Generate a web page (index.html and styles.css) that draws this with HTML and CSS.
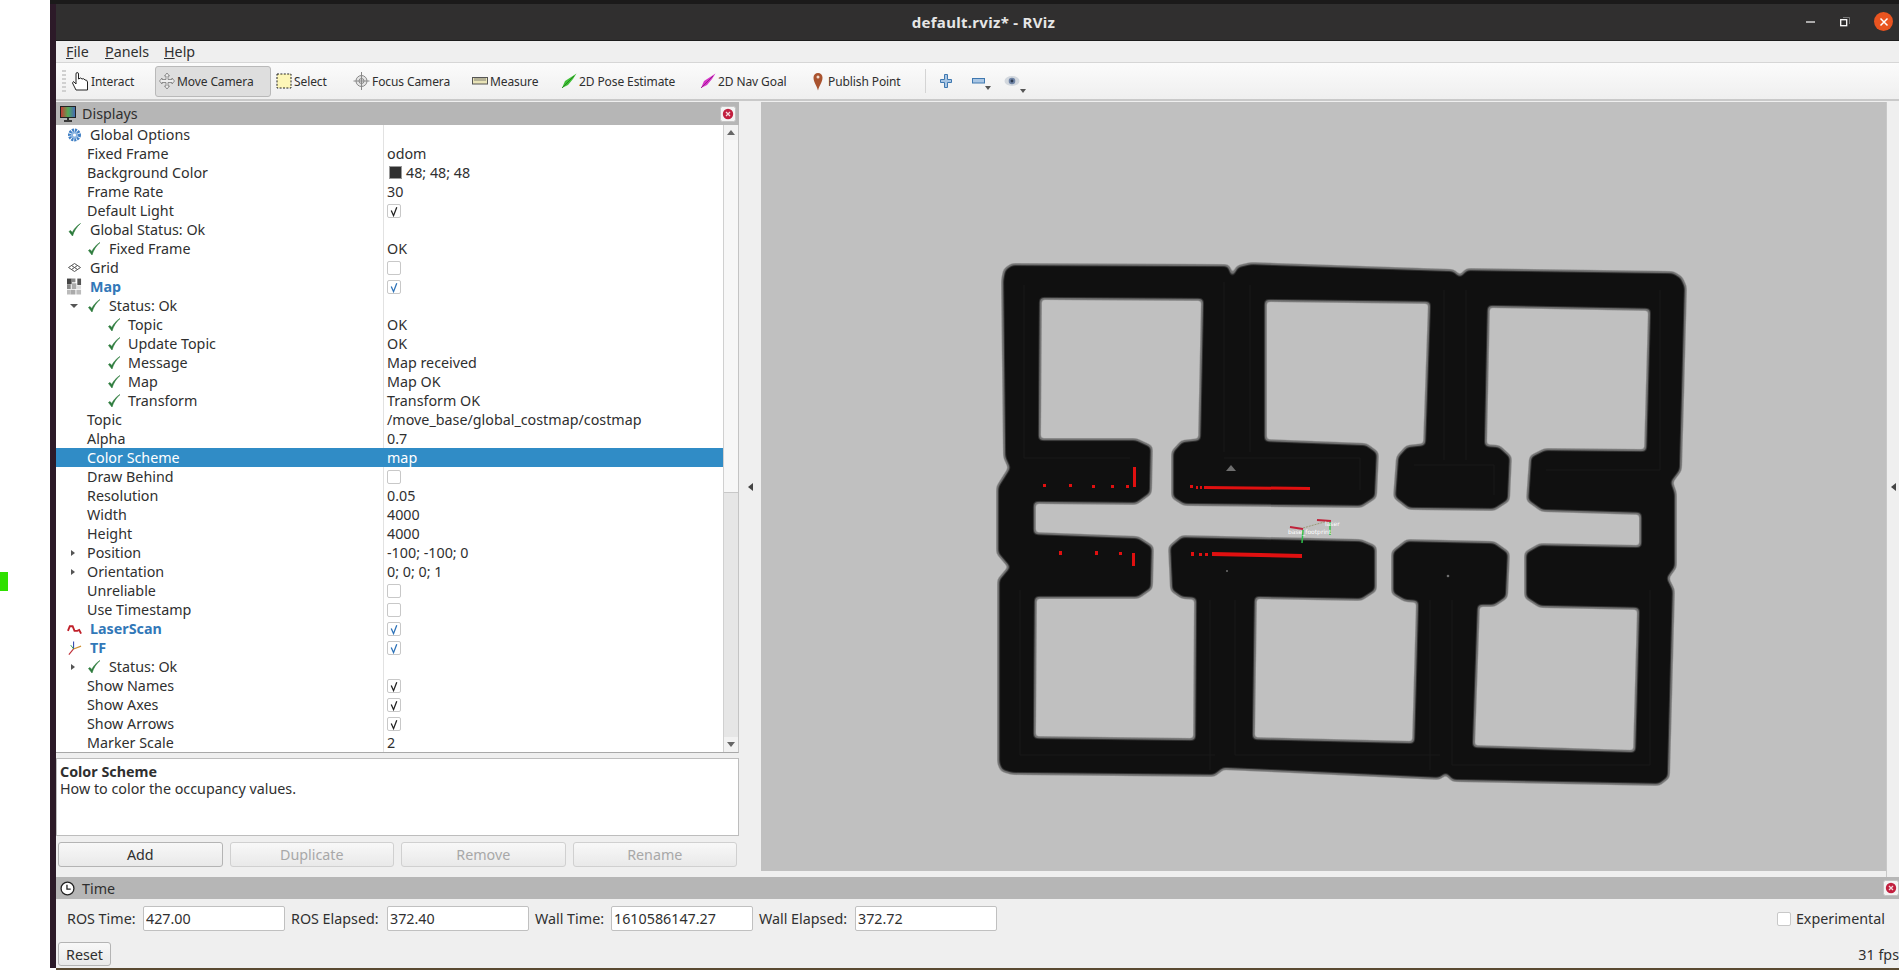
FILE: index.html
```html
<!DOCTYPE html>
<html lang="en">
<head>
  <meta charset="UTF-8">
  <title>default.rviz* - RViz</title>
  <link rel="stylesheet" href="styles.css">
</head>
<body>
  <svg class="defs" width="0" height="0">
    <symbol id="ok" viewBox="0 0 14 16">
      <path d="M1.5 9.5 L5 14 C6.5 9 9 5 13 1.5 C9 4 6.5 7 4.8 10.5 L3 8.5 Z" fill="#2b7a3b" stroke="#2b7a3b" stroke-width=".6"/>
    </symbol>
    <symbol id="tick" viewBox="0 0 13 13">
      <path d="M3.5 5.5 L6 11 L9.5 2" fill="none" stroke="currentColor" stroke-width="1.4"/>
    </symbol>
    <symbol id="redx" viewBox="0 0 16 16">
      <rect x=".5" y=".5" width="15" height="15" rx="2" fill="#f4f4f4" stroke="#c4c4c4"/>
      <circle cx="8" cy="8" r="5.2" fill="#c2203f"/>
      <path d="M6 6 L10 10 M10 6 L6 10" stroke="#f4d8dd" stroke-width="1.3"/>
    </symbol>
  </svg>

  <div class="desktop">
    <div class="green-mark"></div>
  </div>
  <div class="edge"></div>

  <div class="window">
    <div class="topline"></div>
    <header class="titlebar">
      <span class="title">default.rviz* - RViz</span>
      <div class="winbtns">
        <svg width="10" height="4" viewBox="0 0 10 4"><path d="M0 2H9" stroke="#fff" stroke-width="1.2"/></svg>
        <svg width="10" height="10" viewBox="0 0 10 10"><rect x=".7" y="2.7" width="6" height="6" fill="none" stroke="#fff" stroke-width="1.3"/><path d="M3 .5H9.5V7" fill="none" stroke="#8a8a8a" stroke-width=".8"/></svg>
        <span class="winclose"><svg width="10" height="10" viewBox="0 0 10 10"><path d="M1.5 1.5L8.5 8.5M8.5 1.5L1.5 8.5" stroke="#fff" stroke-width="1.5"/></svg></span>
      </div>
    </header>

    <nav class="menubar">
      <span class="m-file"><u>F</u>ile</span>
      <span class="m-panels"><u>P</u>anels</span>
      <span><u>H</u>elp</span>
    </nav>

    <div class="toolbar">
      <div class="grip"></div>
      <div class="tool t-interact">
        <svg width="18" height="20" viewBox="0 0 18 20"><path d="M5 19 L1.5 12 L2.5 10.5 L5 13 V3 Q5 1.5 6.2 1.5 T7.5 3 V8 Q10 6 11 8 Q13 7 14 9 Q16 8.5 16.5 11 V19 Z" fill="#fff" stroke="#222" stroke-width="1"/></svg>
        <span>Interact</span>
      </div>
      <div class="tool t-move on">
        <svg width="16" height="18" viewBox="0 0 16 18"><path d="M8 1 L10.5 4 H9 V7.5 H13 V6 L15.5 9 L13 12 V10.5 H9 V14 H10.5 L8 17 L5.5 14 H7 V10.5 H3 V12 L.5 9 L3 6 V7.5 H7 V4 H5.5 Z" fill="#eee" stroke="#777" stroke-width=".8"/></svg>
        <span>Move Camera</span>
      </div>
      <div class="tool t-select">
        <svg width="16" height="16" viewBox="0 0 16 16"><rect x="1" y="1" width="14" height="14" fill="#fdf6b8" stroke="#222" stroke-dasharray="2 1.4"/></svg>
        <span>Select</span>
      </div>
      <div class="tool t-focus">
        <svg width="17" height="20" viewBox="0 0 17 20"><circle cx="8.500" cy="10" r="5.500" fill="#e4e4e4" stroke="#888"/><path d="M8.500 1V19M.5 10H16.500" stroke="#888"/><circle cx="8.500" cy="10" r="2.500" fill="none" stroke="#888"/></svg>
        <span>Focus Camera</span>
      </div>
      <div class="tool t-measure">
        <svg width="16" height="8" viewBox="0 0 16 8"><rect x=".5" y=".5" width="15" height="6.500" fill="#e9e4b8" stroke="#555"/><path d="M3 1V4M5 1V4M7 1V4M9 1V4M11 1V4M13 1V4" stroke="#555" stroke-width=".7"/></svg>
        <span>Measure</span>
      </div>
      <div class="tool t-pose">
        <svg width="16" height="16" viewBox="0 0 16 16"><path d="M1 15 L4 8 L11 3.500 L15.500 .5 L12 6 L7 12 Z" fill="#3fbf35"/><path d="M1 15 L13 3" stroke="#1d7a1a" stroke-width=".8"/></svg>
        <span>2D Pose Estimate</span>
      </div>
      <div class="tool t-nav">
        <svg width="16" height="16" viewBox="0 0 16 16"><path d="M1 15 L4 8 L11 3.500 L15.500 .5 L12 6 L7 12 Z" fill="#d634c8"/><path d="M1 15 L13 3" stroke="#8a1a80" stroke-width=".8"/></svg>
        <span>2D Nav Goal</span>
      </div>
      <div class="tool t-publish">
        <svg width="10" height="19" viewBox="0 0 10 19"><path d="M5 18.500 C3.500 13 .5 10 .5 5.500 A4.500 4.500 0 0 1 9.500 5.500 C9.500 10 6.500 13 5 18.500 Z" fill="#a9532f"/><circle cx="5" cy="5" r="1.500" fill="#f3dccf"/></svg>
        <span>Publish Point</span>
      </div>
      <div class="tool-sep"></div>
      <svg class="t-plus" width="12" height="14" viewBox="0 0 12 14"><path d="M4.500 .5H7.500V5.500H11.500V8.500H7.500V13.500H4.500V8.500H.5V5.500H4.500Z" fill="#a9c6e4" stroke="#3f78b0"/></svg>
      <div class="t-minus-wrap">
        <svg width="13" height="6" viewBox="0 0 13 6"><rect x=".5" y=".5" width="12" height="4.500" fill="#a9c6e4" stroke="#3f78b0"/></svg>
        <i class="caret"></i>
      </div>
      <div class="t-eye-wrap">
        <svg width="16" height="12" viewBox="0 0 16 12"><ellipse cx="8" cy="6" rx="7.500" ry="5" fill="#d3d8de"/><circle cx="8" cy="6" r="3.300" fill="#6f84a6"/><circle cx="8" cy="6" r="1.400" fill="#2c3a50"/></svg>
        <i class="caret"></i>
      </div>
    </div>

    <div class="workspace">
      <section class="dock">
        <div class="dock-head">
          <svg width="16" height="16" viewBox="0 0 16 16"><defs><linearGradient id="scr" x1="0" x2="1"><stop offset="0" stop-color="#c33"/><stop offset=".5" stop-color="#5a5"/><stop offset="1" stop-color="#46b"/></linearGradient></defs><rect x=".5" y=".5" width="15" height="11" fill="url(#scr)" stroke="#222"/><path d="M8 12V14M4 15H12" stroke="#111" stroke-width="1.600"/></svg>
          <span>Displays</span>
          <svg class="head-x" width="16" height="16"><use href="#redx"/></svg>
        </div>

        <div class="tree-wrap">
          <div class="tree">
            <div class="row"><div class="name l0"><svg class="ic" width="14" height="14" viewBox="0 0 14 14"><circle cx="7" cy="7" r="4.800" fill="none" stroke="#3f7fc4" stroke-width="3.400" stroke-dasharray="2 .8"/><circle cx="7" cy="7" r="3.400" fill="#8ab4e0"/><circle cx="7" cy="7" r="1.500" fill="#fff"/></svg>Global Options</div><div class="val"></div></div>
            <div class="row"><div class="name l1">Fixed Frame</div><div class="val">odom</div></div>
            <div class="row"><div class="name l1">Background Color</div><div class="val"><i class="swatch"></i>48; 48; 48</div></div>
            <div class="row"><div class="name l1">Frame Rate</div><div class="val">30</div></div>
            <div class="row"><div class="name l1">Default Light</div><div class="val"><span class="cb"><svg width="13" height="13"><use href="#tick"/></svg></span></div></div>
            <div class="row"><div class="name l0"><svg class="ic" width="14" height="16"><use href="#ok"/></svg>Global Status: Ok</div><div class="val"></div></div>
            <div class="row"><div class="name l2"><svg class="ic" width="14" height="16"><use href="#ok"/></svg>Fixed Frame</div><div class="val">OK</div></div>
            <div class="row"><div class="name l0"><svg class="ic" width="14" height="14" viewBox="0 0 14 14"><path d="M7 2.500 L13 6.500 L7 10.500 L1 6.500 Z M4 4.500 L10 8.500 M10 4.500 L4 8.500" fill="none" stroke="#555"/></svg>Grid</div><div class="val"><span class="cb"></span></div></div>
            <div class="row"><div class="name l0 blue"><svg class="ic" width="16" height="18" viewBox="0 0 16 18"><path d="M0 0H5V6H0Z" fill="#444"/><path d="M5 0H9V4H5Z M0 6H4V11H0Z" fill="#888"/><path d="M11 0H15V7H11Z" fill="#555"/><path d="M5 5H10V11H5Z M4 12H9V17H4Z" fill="#aaa"/><path d="M0 12H4V17H0Z M10 12H15V17H10Z" fill="#bbb"/><path d="M10 8H15V11H10Z" fill="#ddd"/></svg>Map</div><div class="val"><span class="cb on"><svg width="13" height="13"><use href="#tick"/></svg></span></div></div>
            <div class="row"><div class="name l2"><i class="arrow down"></i><svg class="ic" width="14" height="16"><use href="#ok"/></svg>Status: Ok</div><div class="val"></div></div>
            <div class="row"><div class="name l3"><svg class="ic" width="14" height="16"><use href="#ok"/></svg>Topic</div><div class="val">OK</div></div>
            <div class="row"><div class="name l3"><svg class="ic" width="14" height="16"><use href="#ok"/></svg>Update Topic</div><div class="val">OK</div></div>
            <div class="row"><div class="name l3"><svg class="ic" width="14" height="16"><use href="#ok"/></svg>Message</div><div class="val">Map received</div></div>
            <div class="row"><div class="name l3"><svg class="ic" width="14" height="16"><use href="#ok"/></svg>Map</div><div class="val">Map OK</div></div>
            <div class="row"><div class="name l3"><svg class="ic" width="14" height="16"><use href="#ok"/></svg>Transform</div><div class="val">Transform OK</div></div>
            <div class="row"><div class="name l1">Topic</div><div class="val">/move_base/global_costmap/costmap</div></div>
            <div class="row"><div class="name l1">Alpha</div><div class="val">0.7</div></div>
            <div class="row sel"><div class="name l1">Color Scheme</div><div class="val">map</div></div>
            <div class="row"><div class="name l1">Draw Behind</div><div class="val"><span class="cb"></span></div></div>
            <div class="row"><div class="name l1">Resolution</div><div class="val">0.05</div></div>
            <div class="row"><div class="name l1">Width</div><div class="val">4000</div></div>
            <div class="row"><div class="name l1">Height</div><div class="val">4000</div></div>
            <div class="row"><div class="name l1"><i class="arrow"></i>Position</div><div class="val">-100; -100; 0</div></div>
            <div class="row"><div class="name l1"><i class="arrow"></i>Orientation</div><div class="val">0; 0; 0; 1</div></div>
            <div class="row"><div class="name l1">Unreliable</div><div class="val"><span class="cb"></span></div></div>
            <div class="row"><div class="name l1">Use Timestamp</div><div class="val"><span class="cb"></span></div></div>
            <div class="row"><div class="name l0 blue"><svg class="ic" width="16" height="12" viewBox="0 0 16 12"><path d="M1 8 L3 3 L6 3 L8 8 L11 8 L13 7 L15 11" fill="none" stroke="#c0202a" stroke-width="2"/></svg>LaserScan</div><div class="val"><span class="cb on"><svg width="13" height="13"><use href="#tick"/></svg></span></div></div>
            <div class="row"><div class="name l0 blue"><svg class="ic" width="16" height="16" viewBox="0 0 16 16"><path d="M7 9 L2 15" stroke="#c0303a" stroke-width="1.200"/><path d="M7 9 V1" stroke="#3a50b0" stroke-width="1.200"/><path d="M7 9 L15 6" stroke="#d09030" stroke-width="1.200"/><path d="M7 9 L4 5" stroke="#3a9a40"/></svg>TF</div><div class="val"><span class="cb on"><svg width="13" height="13"><use href="#tick"/></svg></span></div></div>
            <div class="row"><div class="name l2"><i class="arrow"></i><svg class="ic" width="14" height="16"><use href="#ok"/></svg>Status: Ok</div><div class="val"></div></div>
            <div class="row"><div class="name l1">Show Names</div><div class="val"><span class="cb"><svg width="13" height="13"><use href="#tick"/></svg></span></div></div>
            <div class="row"><div class="name l1">Show Axes</div><div class="val"><span class="cb"><svg width="13" height="13"><use href="#tick"/></svg></span></div></div>
            <div class="row"><div class="name l1">Show Arrows</div><div class="val"><span class="cb"><svg width="13" height="13"><use href="#tick"/></svg></span></div></div>
            <div class="row"><div class="name l1">Marker Scale</div><div class="val">2</div></div>
          </div>
          <div class="vscroll">
            <div class="sb-btn"><i class="sb-up"></i></div>
            <div class="sb-thumb"></div>
            <div class="sb-track"></div>
            <div class="sb-btn"><i class="sb-down"></i></div>
          </div>
        </div>

        <div class="desc">
          <b>Color Scheme</b>
          <p>How to color the occupancy values.</p>
        </div>

        <div class="dock-btns">
          <button>Add</button>
          <button disabled>Duplicate</button>
          <button disabled>Remove</button>
          <button disabled>Rename</button>
        </div>
      </section>

      <div class="split-l"><i class="tri-l"></i></div>

      <main class="viewport">
        <svg class="map" width="1125" height="769" viewBox="761 102 1125 769">
          <defs>
            <filter id="costmap" filterUnits="userSpaceOnUse" x="761" y="102" width="1125" height="769" color-interpolation-filters="sRGB">
              <feGaussianBlur stdDeviation="2.2"/>
              <feComponentTransfer>
                <feFuncR type="table" tableValues=".063 .063 .063 .2 .43 .48 .753 .753 .753 .753"/>
                <feFuncG type="table" tableValues=".063 .063 .063 .2 .43 .48 .753 .753 .753 .753"/>
                <feFuncB type="table" tableValues=".063 .063 .063 .2 .43 .48 .753 .753 .753 .753"/>
              </feComponentTransfer>
            </filter>
          </defs>
          <g filter="url(#costmap)">
            <rect class="floor" x="761" y="102" width="1125" height="769"/>
            <polygon class="wall" points="1003,280 1005,270 1012,265 1228,266 1232,277 1238,267 1251,264 1453,271 1460,277 1467,270 1673,273 1681,278 1685,287 1682,400 1680,470 1671,482 1675,493 1675,567 1667,578 1673,590 1668,777 1659,784 1453,780 1446,773 1439,778 1223,768 1214,775 1012,773 1002,770 999,763 999,580 1010,567 998,553 998,487 1010,468 1005,457"/>
            <polygon class="floor" points="1034,502 1136,503 1150,493 1151,447 1136,440 1039,440 1040,298 1203,299 1200,440 1182,442 1173,452 1173,497 1184,504 1361,506 1375,497 1377,453 1366,445 1265,441 1265,300 1430,302 1425,445 1407,447 1398,457 1395,497 1409,508 1494,509 1508,500 1510,457 1499,447 1485,446 1488,306 1650,309 1646,451 1545,450 1531,457 1528,500 1542,510 1641,513 1641,547 1540,545 1526,553 1526,597 1540,606 1639,608 1635,752 1473,747 1478,605 1494,605 1506,597 1508,553 1494,543 1407,541 1393,552 1393,593 1405,600 1418,601 1414,743 1253,739 1255,597 1361,599 1375,590 1375,547 1361,541 1182,537 1170,547 1172,590 1182,597 1196,598 1195,740 1034,738 1035,597 1138,597 1151,588 1152,547 1138,538 1034,534"/>
          </g>
          <path class="inner" d="M1024 285V458H1130M1224 282V452M1250 285V452M1224 458H1360V490M1444 290V460M1466 290V460M1414 465H1494V495M1546 470H1660M1660 290V470M1020 590V755H1215M1210 600V770M1235 600V755H1440M1430 600V770M1452 600V765H1650M1650 590V765"/>
          <g class="scan">
            <rect x="1043" y="484" width="3" height="3"/><rect x="1069" y="484" width="3" height="3"/><rect x="1092" y="485" width="3" height="3"/><rect x="1111" y="485" width="3" height="3"/><rect x="1126" y="485" width="3" height="3"/>
            <rect x="1133" y="467" width="3" height="20"/>
            <rect x="1190" y="485" width="3" height="3"/><rect x="1196" y="486" width="2" height="3"/><rect x="1200" y="486" width="2" height="3"/>
            <polygon points="1204,486 1310,487 1310,490 1204,489"/>
            <rect x="1059" y="551" width="3" height="4"/><rect x="1095" y="551" width="3" height="4"/><rect x="1119" y="552" width="3" height="3"/>
            <rect x="1132" y="553" width="3" height="13"/>
            <rect x="1191" y="552" width="3" height="4"/><rect x="1199" y="553" width="3" height="3"/><rect x="1205" y="553" width="3" height="3"/>
            <polygon points="1212,552 1302,554 1302,558 1212,556"/>
          </g>
          <polygon class="speck" points="1231,465 1236,471 1226,471"/>
          <circle class="speck" cx="1227" cy="571" r="1"/>
          <circle class="speck" cx="1448" cy="576" r="1.300"/>
          <g class="tf">
            <path class="tf-link" d="M1303 528L1328 521"/>
            <path class="tf-x" d="M1290 527L1303 529M1317 520L1331 521"/>
            <path class="tf-y" d="M1303 530L1302 543M1330 522V535"/>
            <text x="1288" y="534">base_footprint</text>
            <text x="1325" y="526">laser</text>
          </g>
        </svg>
      </main>

      <div class="split-r"><i class="tri-l"></i></div>
    </div>

    <section class="timepanel">
      <div class="time-head">
        <svg width="15" height="15" viewBox="0 0 14 14"><circle cx="7" cy="7" r="6" fill="#fff" stroke="#222" stroke-width="1.200"/><path d="M6.500 3.500V7.500H10" fill="none" stroke="#222" stroke-width="1.200"/></svg>
        <span>Time</span>
        <svg class="head-x" width="16" height="16"><use href="#redx"/></svg>
      </div>
      <div class="time-row">
        <label class="tl-a">ROS Time:</label><input class="ti" value="427.00">
        <label class="tl-b">ROS Elapsed:</label><input class="ti" value="372.40">
        <label class="tl-a">Wall Time:</label><input class="ti" value="1610586147.27">
        <label class="tl-b">Wall Elapsed:</label><input class="ti" value="372.72">
        <span class="exp"><span class="cb"></span>Experimental</span>
      </div>
      <div class="reset-row">
        <button class="reset">Reset</button>
        <span class="fps">31 fps</span>
      </div>
    </section>
  </div>
</body>
</html>
```
FILE: styles.css
```css
* {
  box-sizing: border-box;
}
html, body {
  margin: 0;
  height: 100%;
  overflow: hidden;
}
body {
  display: flex;
  width: 1899px;
  height: 970px;
  background: #fff;
  font-family: "Noto Sans", sans-serif;
  font-size: 14.3px;
  color: #2f2f2f;
}
.defs {
  position: absolute;
}
.desktop {
  width: 50px;
  background: #fff;
  padding-top: 572px;
}
.green-mark {
  width: 8px;
  height: 19px;
  background: #2fe000;
}
.edge {
  width: 6px;
  margin-top: 4px;
  height: 964px;
  background: #2c1a28;
}
.window {
  width: 1843px;
  height: 970px;
  display: flex;
  flex-direction: column;
  background: #efefef;
  border-bottom: 2px solid #5a4a32;
}
.topline {
  height: 4px;
  margin-left: -6px;
  background: #1b1a1a;
}
.titlebar {
  height: 37px;
  background: #302f2f;
  border-bottom: 1px solid #1c1c1c;
  display: flex;
  align-items: center;
  justify-content: center;
  position: relative;
}
.title {
  color: #e6e6e6;
  font-weight: 700;
  font-size: 15px;
  letter-spacing: .3px;
  margin-left: 12px;
}
.winbtns {
  position: absolute;
  right: 6px;
  top: 8px;
  display: flex;
  align-items: center;
  gap: 24px;
}
.winclose {
  width: 19px;
  height: 19px;
  border-radius: 50%;
  background: #e95420;
  display: flex;
  align-items: center;
  justify-content: center;
}
.menubar {
  height: 22px;
  display: flex;
  align-items: center;
  padding-left: 10px;
  border-bottom: 1px solid #d6d6d6;
}
.m-file { width: 39px; }
.m-panels { width: 59px; }
.toolbar {
  height: 38px;
  display: flex;
  align-items: center;
  background: linear-gradient(#fbfbfb, #efefef);
  border-bottom: 2px solid #c9c9c9;
  padding-left: 6px;
  font-size: 12px;
  letter-spacing: -.1px;
}
.grip {
  width: 4px;
  height: 22px;
  border-left: 2px dotted #d0d0d0;
  border-right: 2px dotted #d0d0d0;
  margin-right: 5px;
}
.tool {
  display: flex;
  align-items: center;
  height: 31px;
  gap: 2px;
  flex: none;
}
.tool.on {
  background: #dedede;
  border: 1px solid #b9b9b9;
  border-radius: 3px;
  padding-left: 3px;
}
.t-interact { width: 84px; }
.t-move { width: 116px; margin-right: 5px; }
.t-select { width: 77px; }
.t-focus { width: 119px; }
.t-measure { width: 89px; }
.t-pose { width: 139px; }
.t-nav { width: 113px; }
.t-publish { width: 112px; gap: 5px; }
.tool-sep {
  width: 1px;
  height: 24px;
  background: #d4d4d4;
  margin-right: 14px;
}
.t-plus {
  margin-right: 20px;
}
.t-minus-wrap, .t-eye-wrap {
  position: relative;
  display: flex;
  margin-right: 19px;
}
.caret {
  position: absolute;
  right: -6px;
  bottom: -9px;
  border: 3px solid transparent;
  border-top: 4px solid #555;
}
.workspace {
  height: 775px;
  display: flex;
  margin-top: 1px;
}
.dock {
  width: 683px;
  display: flex;
  flex-direction: column;
}
.dock-head, .time-head {
  display: flex;
  align-items: center;
  background: #b6b6b6;
  flex: none;
}
.dock-head {
  height: 23px;
  gap: 6px;
  padding: 0 3px 0 4px;
}
.head-x {
  margin-left: auto;
  flex: none;
}
.tree-wrap {
  height: 628px;
  display: flex;
  background: #fff;
  border-bottom: 1px solid #a8a8a8;
  border-right: 1px solid #c4c4c4;
  flex: none;
}
.tree {
  width: 668px;
}
.row {
  height: 19px;
  display: flex;
  line-height: 19px;
  white-space: nowrap;
}
.name {
  width: 327px;
  display: flex;
  align-items: center;
  flex: none;
}
.val {
  flex: 1;
  display: flex;
  align-items: center;
  border-left: 1px solid #e2e2e2;
  padding-left: 3px;
}
.l0 { padding-left: 11px; }
.l1 { padding-left: 31px; }
.l2 { padding-left: 31px; }
.l3 { padding-left: 51px; }
.l0 .ic { margin-right: 8px; flex: none; width: 15px; }
.l2 .ic { margin-right: 8px; flex: none; }
.l3 .ic { margin-right: 7px; flex: none; }
.blue {
  color: #3278b8;
  font-weight: 700;
}
.sel {
  background: #308cc6;
  color: #fff;
}
.sel .val {
  border-left-color: #308cc6;
}
.arrow {
  width: 17px;
  margin-left: -17px;
  flex: none;
  display: flex;
  justify-content: flex-start;
  padding-left: 1px;
}
.arrow::before {
  content: "";
  border: 3.5px solid transparent;
  border-left: 4px solid #555;
  border-right: 0;
}
.arrow.down {
  padding-left: 0;
  padding-top: 1px;
}
.arrow.down::before {
  border: 4px solid transparent;
  border-top: 4px solid #555;
  border-bottom: 0;
}
.swatch {
  width: 13px;
  height: 13px;
  background: #303030;
  margin: 0 4px 0 2px;
  border: 1px solid #999;
}
.cb {
  width: 14px;
  height: 14px;
  background: #fff;
  border: 1px solid #c8c8c8;
  border-radius: 2px;
  display: flex;
  color: #222;
  flex: none;
}
.cb.on {
  color: #2d72b8;
}
.vscroll {
  width: 15px;
  display: flex;
  flex-direction: column;
  border-left: 1px solid #d0d0d0;
  background: #e6e6e6;
}
.sb-btn {
  height: 15px;
  background: #f2f2f2;
  display: flex;
  align-items: center;
  justify-content: center;
}
.sb-up {
  border: 4px solid transparent;
  border-bottom: 5px solid #666;
  border-top: 0;
}
.sb-down {
  border: 4px solid transparent;
  border-top: 5px solid #666;
  border-bottom: 0;
}
.sb-thumb {
  height: 353px;
  background: #f7f7f7;
  border-bottom: 1px solid #c8c8c8;
}
.sb-track {
  flex: 1;
}
.desc {
  height: 78px;
  margin-top: 5px;
  background: #fff;
  border: 1px solid #bdbdbd;
  padding: 4px 3px;
  line-height: 17px;
  flex: none;
}
.desc b {
  display: block;
}
.desc p {
  margin: 0;
}
.dock-btns {
  display: flex;
  gap: 7px;
  padding: 6px 2px 0;
}
button {
  font: inherit;
  color: inherit;
  height: 25px;
  padding: 0;
  background: linear-gradient(#f8f8f8, #e9e9e9);
  border: 1px solid #b4b4b4;
  border-radius: 3px;
}
.dock-btns button {
  flex: 1;
}
button:disabled {
  color: #a8a8a8;
  border-color: #d0d0d0;
}
.split-l {
  width: 22px;
  display: flex;
  align-items: center;
  justify-content: center;
  padding-bottom: 6px;
}
.split-r {
  flex: 1;
  display: flex;
  align-items: center;
  justify-content: center;
  padding-bottom: 6px;
  border-left: 1px solid #c8c8c8;
}
.tri-l {
  border: 4px solid transparent;
  border-right: 5px solid #444;
  border-left: 0;
}
.viewport {
  width: 1125px;
  height: 769px;
  background: #c0c0c0;
  flex: none;
}
.map {
  display: block;
}
.floor {
  fill: #c0c0c0;
}
.wall {
  fill: #101010;
}
.inner {
  fill: none;
  stroke: #191919;
  stroke-width: 1;
}
.scan {
  fill: #e01010;
}
.speck {
  fill: #6e6e6e;
}
.tf text {
  fill: #fff;
  font-size: 6px;
  font-family: "DejaVu Sans", sans-serif;
}
.tf-link {
  stroke: #9a9a78;
  stroke-dasharray: 2 1;
}
.tf-x {
  stroke: #c0223a;
  stroke-width: 2;
}
.tf-y {
  stroke: #2fc04a;
  stroke-width: 1.500;
}
.timepanel {
  flex: 1;
  display: flex;
  flex-direction: column;
}
.time-head {
  height: 22px;
  gap: 7px;
  padding: 0 0 0 4px;
}
.time-row {
  display: flex;
  align-items: center;
  height: 25px;
  margin-top: 7px;
  padding-left: 11px;
}
.time-row label {
  flex: none;
  white-space: nowrap;
}
.tl-a { width: 76px; }
.tl-b { width: 96px; }
.ti {
  font: inherit;
  color: inherit;
  width: 142px;
  height: 25px;
  padding: 0 2px;
  background: #fff;
  border: 1px solid #c0c0c0;
  border-radius: 2px;
  margin-right: 6px;
}
.exp {
  margin-left: auto;
  margin-right: 14px;
  display: flex;
  align-items: center;
  gap: 5px;
}
.reset-row {
  display: flex;
  align-items: center;
  margin-top: 11px;
  padding-left: 2px;
}
.reset {
  width: 53px;
  height: 24px;
}
.fps {
  margin-left: auto;
}
```
